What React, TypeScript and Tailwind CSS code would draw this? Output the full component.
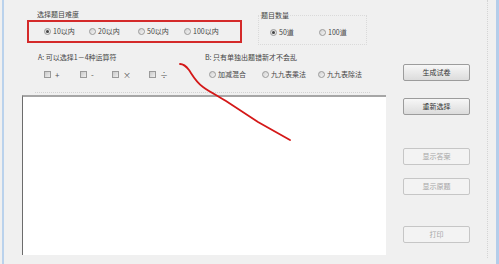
import React from 'react'

function Radio({ checked, label, w }: { checked?: boolean; label: string; w: string }) {
  return <div className={`flex items-center ${w}`}>
    <span className="w-[7px] h-[7px] rounded-full border border-[#9a9a9a] bg-gradient-to-br from-[#d2d2d2] to-[#f4f4f4] flex items-center justify-center shrink-0">
      {checked ? <span className="w-[3px] h-[3px] rounded-full bg-[#444]" /> : null}
    </span>
    <span className="ml-[2px] text-[7px] leading-[9px] text-[#444] whitespace-nowrap">{label}</span>
  </div>
}

function Check({ label, w }: { label: string; w: string }) {
  return <div className={`flex items-center ${w}`}>
    <span className="w-[7px] h-[7px] border border-[#9a9a9a] bg-gradient-to-br from-[#cacaca] to-[#eeeeee] shrink-0" />
    <span className="ml-[4px] text-[8px] leading-[9px] text-[#555]">{label}</span>
  </div>
}

function Btn({ label, disabled }: { label: string; disabled?: boolean }) {
  return <div
    className={`w-[67px] h-[17px] rounded-[2px] border flex items-center justify-center text-[7px] ${disabled
      ? 'border-[#c6c6c6] bg-[#f3f3f3] text-[#a6a6a6]'
      : 'border-[#9c9c9c] bg-gradient-to-b from-[#f7f7f7] to-[#dcdcdc] text-[#333]'
      }`}
  >
    {label}
  </div>
}

export default function App() {
  return <div className="w-[499px] h-[264px] bg-[#f0f0f0] flex relative overflow-hidden font-['Noto_Sans_CJK_SC','Liberation_Sans',sans-serif]">
    <div className="w-[2px] ml-[2px] bg-[#bad2ec]" />

    {/* left pane */}
    <div className="ml-[18px] w-[364px] flex flex-col">
      <div className="flex h-[46px]">
        <div className="ml-[5px] w-[215px] flex flex-col">
          <div className="pt-[9px] pl-[10px] text-[7px] leading-[10px] text-[#444]">选择题目难度</div>
          <div className="mt-[1px] h-[23px] border-2 border-[#d42a2a] flex items-center pl-[15px]">
            <Radio checked label="10以内" w="w-[45px]" />
            <Radio label="20以内" w="w-[49px]" />
            <Radio label="50以内" w="w-[46px]" />
            <Radio label="100以内" w="w-[45px]" />
          </div>
        </div>
        <fieldset className="ml-[16px] mt-[11px] w-[109px] h-[34px] border border-dotted border-[#dadada] px-0">
          <legend className="ml-[2px] text-[7px] leading-[8px] text-[#444]">题目数量</legend>
          <div className="flex items-center pl-[11px] mt-[9px]">
            <Radio checked label="50道" w="w-[49px]" />
            <Radio label="100道" w="w-[45px]" />
          </div>
        </fieldset>
      </div>

      <div className="flex h-[46px]">
        <div className="ml-[16px] w-[167px] flex flex-col">
          <div className="mt-[6px] text-[7px] leading-[10px] text-[#444]">A: 可以选择1－4种运算符</div>
          <div className="mt-[8px] flex items-center pl-[6px]">
            <Check label="+" w="w-[36px]" />
            <Check label="-" w="w-[32px]" />
            <Check label="×" w="w-[37px]" />
            <Check label="÷" w="w-[30px]" />
          </div>
        </div>
        <div className="flex flex-col">
          <div className="mt-[6px] text-[7px] leading-[10px] text-[#444]">B: 只有单独出题错新才不会乱</div>
          <div className="mt-[8px] flex items-center pl-[4px]">
            <Radio label="加减混合" w="w-[53px]" />
            <Radio label="九九表乘法" w="w-[56px]" />
            <Radio label="九九表除法" w="w-[60px]" />
          </div>
        </div>
      </div>

      <div className="ml-[13px] w-[335px] border-t border-dotted border-[#d2d2d2]" />
      <div className="mt-[2px] h-[160px] bg-white border-t-2 border-t-[#a6a6a6] border-l-[1.5px] border-l-[#6c6c6c]" />
    </div>

    {/* right buttons */}
    <div className="ml-[17px] pt-[64px] flex flex-col">
      <Btn label="生成试卷" />
      <div className="mt-[17px]"><Btn label="重新选择" /></div>
      <div className="mt-[33px]"><Btn label="显示答案" disabled /></div>
      <div className="mt-[13px]"><Btn label="显示原题" disabled /></div>
      <div className="mt-[31px]"><Btn label="打印" disabled /></div>
    </div>

    <div className="ml-[17px] h-[258px] border-l border-dotted border-[#d4d4d4]" />
    <div className="ml-auto w-[3px] bg-[#b4cdea]" />

    <svg className="absolute inset-0 pointer-events-none" width="499" height="264" viewBox="0 0 499 264">
      <path
        d="M180 64 C184 64, 186 66, 189 70 C193 76, 196 82, 203 87 C210 92, 218 96, 226 101 L258 122 L290 140"
        fill="none"
        stroke="#d41818"
        strokeWidth="1.8"
        strokeLinecap="round"
      />
    </svg>
  </div>
}
